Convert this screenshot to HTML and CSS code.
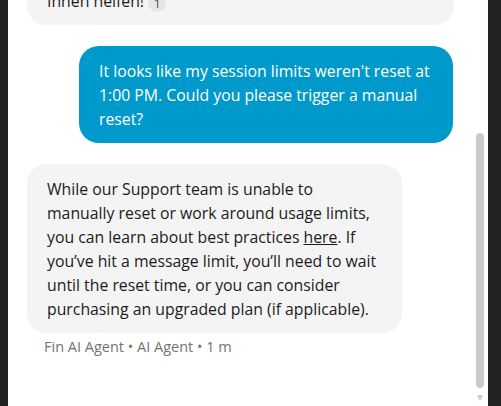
FILE: index.html
```html
<!DOCTYPE html>
<html>
<head>
<meta charset="utf-8">
<link rel="stylesheet" href="styles.css">
</head>
<body>
<div class="panel">
  <div class="thread">
    <div class="bubble bubble--bot bubble--first">Ihnen helfen! <span class="badge">1</span></div>
    <div class="bubble bubble--user">It looks like my session limits weren't reset at<br>1:00 PM. Could you please trigger a manual<br>reset?</div>
    <div class="msg">
      <div class="bubble bubble--bot bubble--answer">While our Support team is unable to<br>manually reset or work around usage limits,<br>you can learn about best practices <a class="link" href="#">here</a>. If<br>you’ve hit a message limit, you’ll need to wait<br>until the reset time, or you can consider<br>purchasing an upgraded plan (if applicable).</div>
      <div class="meta">Fin AI Agent • AI Agent • 1 m</div>
    </div>
  </div>
  <div class="scroll-thumb"></div>
  <div class="scroll-arrow"></div>
</div>
</body>
</html>
```
FILE: styles.css
```css
html, body {
  margin: 0;
  padding: 0;
}
body {
  background: #222222;
  height: 406px;
  overflow: hidden;
  font-family: "Open Sans", "Noto Sans", sans-serif;
}
.panel {
  position: relative;
  margin-left: 8px;
  width: 480px;
  height: 406px;
  background: #ffffff;
  overflow: hidden;
}
.thread {
  display: flex;
  flex-direction: column;
  gap: 21px;
  padding: 0 35px 0 19px;
  margin-top: -24px;
}
.bubble {
  box-sizing: border-box;
  padding: 12.5px 20px;
  border-radius: 20px;
  font-size: 15.8px;
  line-height: 24px;
  white-space: nowrap;
}
.bubble--bot {
  background: #f4f4f4;
  color: #1b1b1b;
  align-self: flex-start;
}
.bubble--first {
  width: 427px;
  padding-top: 13px;
  padding-bottom: 12px;
}
.bubble--answer {
  width: 375px;
}
.bubble--user {
  align-self: flex-end;
  width: 374px;
  background: #0099cc;
  color: #ffffff;
}
.badge {
  display: inline-flex;
  align-items: center;
  justify-content: center;
  width: 18px;
  height: 18px;
  border-radius: 50%;
  background: #e6e6e6;
  color: #555555;
  font-size: 13px;
  line-height: 18px;
  vertical-align: -1px;
}
.link {
  color: inherit;
  text-decoration: underline;
}
.msg {
  display: flex;
  flex-direction: column;
  gap: 5px;
}
.meta {
  padding-left: 17px;
  font-size: 14.5px;
  line-height: 18px;
  color: #737373;
}
.scroll-thumb {
  position: absolute;
  left: 468px;
  top: 133px;
  width: 8px;
  height: 255px;
  border-radius: 4px;
  background: #cbcbcd;
}
.scroll-arrow {
  position: absolute;
  left: 469px;
  top: 395px;
  width: 0;
  height: 0;
  border-left: 3.5px solid transparent;
  border-right: 3.5px solid transparent;
  border-top: 6px solid #cbcbcd;
}
```
